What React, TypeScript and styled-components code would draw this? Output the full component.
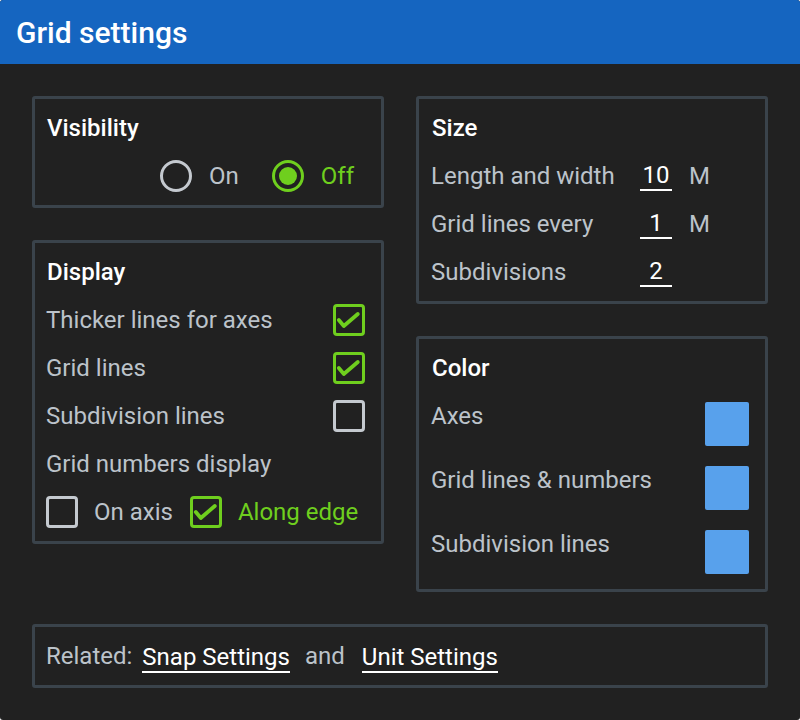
import React from "react";
import styled, { createGlobalStyle } from "styled-components";

const GREEN = "#6fcf1e";
const GRAY = "#bcc3ca";
const BORDER = "#3a434b";

const Global = createGlobalStyle`
  html, body { margin: 0; padding: 0; background: #ffffff; }
  body { font-family: Roboto, "Liberation Sans", sans-serif; }
  * { box-sizing: border-box; }
`;

const Panel = styled.div`
  width: 800px;
  height: 720px;
  background: #212121;
  border-radius: 3px;
  overflow: hidden;
  display: flex;
  flex-direction: column;
`;

const Header = styled.header`
  height: 64px;
  flex: none;
  background: #1565c0;
  display: flex;
  align-items: center;
  padding-left: 16px;
  color: #ffffff;
  font-size: 30px;
  font-weight: 500;
`;

const Body = styled.main`
  flex: 1;
  padding: 32px;
  display: grid;
  grid-template-columns: 352px 352px;
  grid-template-rows: auto auto;
  column-gap: 32px;
  row-gap: 32px;
  align-content: start;
`;

const Column = styled.div`
  display: flex;
  flex-direction: column;
  gap: 32px;
`;

const Box = styled.section<{ $wide?: boolean; $pl?: number }>`
  border: 3px solid ${BORDER};
  border-radius: 3px;
  padding: 5px 16px 5px ${(p) => p.$pl ?? 11}px;
  display: flex;
  flex-direction: column;
  ${(p) => (p.$wide ? "grid-column: 1 / span 2;" : "")}
`;

const Row = styled.div<{ $end?: boolean }>`
  height: 48px;
  display: flex;
  align-items: center;
  justify-content: ${(p) => (p.$end ? "flex-end" : "space-between")};
`;

const Title = styled.h2`
  margin: 0;
  height: 48px;
  line-height: 48px;
  font-size: 24px;
  font-weight: 500;
  color: #ffffff;
  padding-left: 1px;
`;

const Label = styled.span<{ $on?: boolean }>`
  font-size: 24px;
  line-height: 48px;
  color: ${(p) => (p.$on ? GREEN : GRAY)};
  white-space: nowrap;
`;

const RadioGroup = styled.div`
  display: flex;
  align-items: center;
  margin-right: 11px;
`;

const Option = styled.label<{ $gap?: number }>`
  display: flex;
  align-items: center;
  gap: 17px;
  margin-left: ${(p) => p.$gap ?? 0}px;
`;

const RadioCircle = styled.span<{ $on?: boolean }>`
  width: 32px;
  height: 32px;
  border-radius: 50%;
  border: 3px solid ${(p) => (p.$on ? GREEN : "#c4c9cf")};
  display: flex;
  align-items: center;
  justify-content: center;
  &::after {
    content: "";
    width: 18px;
    height: 18px;
    border-radius: 50%;
    background: ${(p) => (p.$on ? GREEN : "transparent")};
  }
`;

const CheckBoxFrame = styled.span<{ $on?: boolean }>`
  width: 32px;
  height: 32px;
  flex: none;
  border: 3px solid ${(p) => (p.$on ? GREEN : "#c4c9cf")};
  border-radius: 4px;
  display: flex;
`;

const Check = ({ on }: { on?: boolean }) => (
  <CheckBoxFrame $on={on}>
    {on && (
      <svg width="26" height="26" viewBox="0 0 26 26">
        <path
          d="M2.8 13 L7.8 19 L21.8 7"
          fill="none"
          stroke={GREEN}
          strokeWidth="3.8"
          strokeLinecap="round"
          strokeLinejoin="round"
        />
      </svg>
    )}
  </CheckBoxFrame>
);

const InlineChecks = styled.div`
  display: flex;
  align-items: center;
  height: 48px;
`;

const CheckOption = styled.label<{ $gap?: number }>`
  display: flex;
  align-items: center;
  gap: 16px;
  margin-left: ${(p) => p.$gap ?? 0}px;
`;

const SizeRow = styled.div`
  height: 48px;
  display: flex;
  align-items: center;
`;

const SizeLabel = styled(Label)`
  width: 209px;
  flex: none;
`;

const Field = styled.span`
  width: 32px;
  height: 30px;
  line-height: 28px;
  text-align: center;
  font-size: 24px;
  color: #ffffff;
  border-bottom: 2px solid #ffffff;
  flex: none;
`;

const Unit = styled(Label)`
  margin-left: 17px;
`;

const ColorRow = styled.div`
  height: 64px;
  display: flex;
  align-items: flex-start;
  justify-content: space-between;
`;

const Swatch = styled.span<{ $color: string }>`
  width: 44px;
  height: 44px;
  margin-top: 10px;
  border-radius: 2px;
  background: ${(p) => p.$color};
`;

const Related = styled.div`
  height: 48px;
  display: flex;
  align-items: center;
`;

const Plain = styled(Label)<{ $mr: number }>`
  margin-right: ${(p) => p.$mr}px;
`;

const Link = styled.a<{ $mr?: number }>`
  font-size: 24px;
  line-height: 28px;
  height: 31px;
  padding-top: 1px;
  color: #ffffff;
  text-decoration: none;
  border-bottom: 2px solid #ffffff;
  margin-right: ${(p) => p.$mr ?? 0}px;
  margin-top: 2px;
`;

const sizeRows = [
  { label: "Length and width", value: "10", unit: "M" },
  { label: "Grid lines every", value: "1", unit: "M" },
  { label: "Subdivisions", value: "2", unit: "" },
];

const colorRows = ["Axes", "Grid lines & numbers", "Subdivision lines"];

const displayRows = [
  { label: "Thicker lines for axes", on: true },
  { label: "Grid lines", on: true },
  { label: "Subdivision lines", on: false },
];

export default function App() {
  return (
    <>
      <Global />
      <Panel>
        <Header>Grid settings</Header>
        <Body>
          <Column>
            <Box>
              <Title>Visibility</Title>
              <Row $end>
                <RadioGroup>
                  <Option>
                    <RadioCircle />
                    <Label>On</Label>
                  </Option>
                  <Option $gap={33}>
                    <RadioCircle $on />
                    <Label $on>Off</Label>
                  </Option>
                </RadioGroup>
              </Row>
            </Box>
            <Box>
              <Title>Display</Title>
              {displayRows.map((r) => (
                <Row key={r.label}>
                  <Label>{r.label}</Label>
                  <Check on={r.on} />
                </Row>
              ))}
              <Row>
                <Label>Grid numbers display</Label>
              </Row>
              <InlineChecks>
                <CheckOption>
                  <Check />
                  <Label>On axis</Label>
                </CheckOption>
                <CheckOption $gap={17}>
                  <Check on />
                  <Label $on>Along edge</Label>
                </CheckOption>
              </InlineChecks>
            </Box>
          </Column>
          <Column>
            <Box $pl={12}>
              <Title>Size</Title>
              {sizeRows.map((r) => (
                <SizeRow key={r.label}>
                  <SizeLabel>{r.label}</SizeLabel>
                  <Field>{r.value}</Field>
                  {r.unit && <Unit>{r.unit}</Unit>}
                </SizeRow>
              ))}
            </Box>
            <Box $pl={12}>
              <Title>Color</Title>
              {colorRows.map((c) => (
                <ColorRow key={c}>
                  <Label>{c}</Label>
                  <Swatch $color="#58a1ec" />
                </ColorRow>
              ))}
            </Box>
          </Column>
          <Box $wide>
            <Related>
              <Plain $mr={10}>Related:</Plain>
              <Link href="#" $mr={15}>
                Snap Settings
              </Link>
              <Plain $mr={17}>and</Plain>
              <Link href="#">Unit Settings</Link>
            </Related>
          </Box>
        </Body>
      </Panel>
    </>
  );
}
